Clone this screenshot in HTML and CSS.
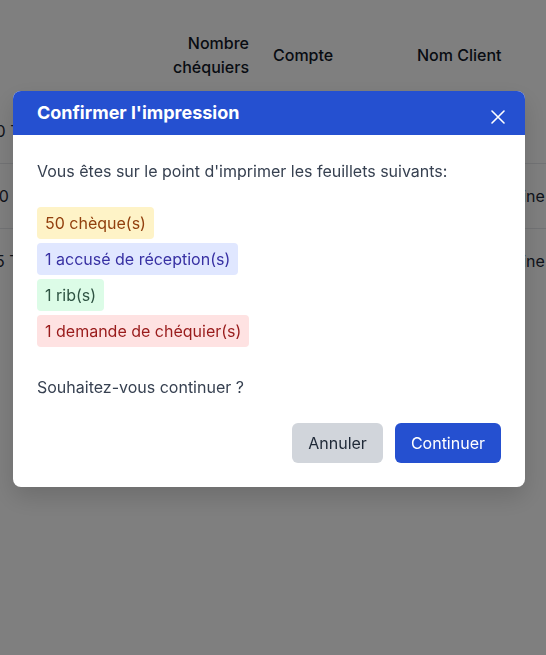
FILE: index.html
```html
<!DOCTYPE html>
<html lang="fr">
<head>
    <meta charset="UTF-8">
    <meta name="viewport" content="width=device-width, initial-scale=1.0">
    <title>Impression</title>
    <link rel="stylesheet" href="styles.css">
</head>
<body>

    <div class="table-wrap">
        <table class="list">
            <thead>
                <tr>
                    <th class="col-montant">N°</th>
                    <th class="col-nb">Nombre<br>chéquiers</th>
                    <th class="col-compte">Compte</th>
                    <th class="col-client">Nom Client</th>
                </tr>
            </thead>
            <tbody>
                <tr>
                    <td>3 000 TND</td>
                    <td class="num">2</td>
                    <td>0102345678</td>
                    <td>Ali Ben Salah</td>
                </tr>
                <tr>
                    <td>11 000</td>
                    <td class="num">1</td>
                    <td>0102345679</td>
                    <td>Mohamed Amine</td>
                </tr>
                <tr>
                    <td>2 205 TND</td>
                    <td class="num">1</td>
                    <td>0102345680</td>
                    <td>Mohamed Amine</td>
                </tr>
            </tbody>
        </table>
    </div>

    <div class="overlay">
        <div class="modal">
            <div class="modal-head">
                <h2>Confirmer l'impression</h2>
                <button type="button" class="close" aria-label="Fermer">
                    <svg width="14" height="14" viewBox="0 0 14 14">
                        <path d="M1 1 L13 13 M13 1 L1 13" stroke="#fff" stroke-width="1.6" stroke-linecap="round" fill="none"/>
                    </svg>
                </button>
            </div>
            <div class="modal-body">
                <p>Vous êtes sur le point d'imprimer les feuillets suivants:</p>

                <div class="badges">
                    <span class="badge yellow">50 chèque(s)</span>
                    <span class="badge indigo">1 accusé de réception(s)</span>
                    <span class="badge green">1 rib(s)</span>
                    <span class="badge red">1 demande de chéquier(s)</span>
                </div>

                <p class="ask">Souhaitez-vous continuer ?</p>

                <div class="actions">
                    <button type="button" class="btn btn-cancel">Annuler</button>
                    <button type="button" class="btn btn-ok">Continuer</button>
                </div>
            </div>
        </div>
    </div>

</body>
</html>
```

FILE: styles.css
```css
body {
    margin: 0;
    background: #fff;
    font-family: Inter, "Noto Sans", sans-serif;
    color: #111827;
}

.table-wrap {
    overflow: hidden;
    padding-top: 11px;
}

.list {
    border-collapse: collapse;
    table-layout: fixed;
    width: 605px;
    margin-left: -51px;
    font-size: 16px;
    line-height: 24px;
}

.list th,
.list td {
    box-sizing: border-box;
    padding: 20px 12px;
    white-space: nowrap;
}

.list th {
    font-weight: 500;
    color: #111827;
}

.list td {
    color: #1f2937;
}

.list tbody tr + tr td {
    border-top: 1px solid #e5e7eb;
}

.col-montant {
    width: 160px;
    text-align: left;
}

.col-nb {
    width: 152px;
    text-align: right;
}

.col-compte {
    width: 144px;
    text-align: left;
}

.col-client {
    width: 149px;
    text-align: left;
}

.list td.num {
    text-align: right;
}

/* modal */

.overlay {
    position: fixed;
    inset: 0;
    background: rgba(0, 0, 0, 0.5);
    display: flex;
    justify-content: center;
    align-items: flex-start;
    padding: 91px 8px 0 0;
}

.modal {
    width: 512px;
    background: #fff;
    border-radius: 8px;
    overflow: hidden;
    box-shadow: 0 10px 25px rgba(0, 0, 0, 0.15);
}

.modal-head {
    background: #2550d0;
    display: flex;
    justify-content: space-between;
    align-items: center;
    padding: 8px 20px 8px 24px;
}

.modal-head h2 {
    margin: 0;
    font-size: 18px;
    line-height: 28px;
    font-weight: 700;
    color: #fff;
}

.close {
    background: none;
    border: 0;
    padding: 0;
    width: 14px;
    height: 14px;
    margin-top: 8px;
    display: flex;
}

.modal-body {
    padding: 24px;
    color: #374151;
}

.modal-body p {
    margin: 0;
    font-size: 16px;
    line-height: 24px;
}

.badges {
    display: flex;
    flex-direction: column;
    align-items: flex-start;
    gap: 4px;
    margin-top: 24px;
}

.badge {
    font-size: 16px;
    line-height: 24px;
    padding: 4px 8px;
    border-radius: 4px;
}

.yellow {
    background: #fef3c7;
    color: #92400e;
}

.indigo {
    background: #e0e7ff;
    color: #3730a3;
}

.green {
    background: #dcfce7;
    color: #2f5443;
}

.red {
    background: #fee2e2;
    color: #991b1b;
}

.modal-body p.ask {
    margin-top: 28px;
}

.actions {
    display: flex;
    justify-content: flex-end;
    gap: 12px;
    margin-top: 24px;
}

.btn {
    font-family: inherit;
    font-size: 16px;
    line-height: 24px;
    padding: 8px 16px;
    border: 0;
    border-radius: 6px;
}

.btn-cancel {
    background: #d1d5db;
    color: #1f2937;
}

.btn-ok {
    background: #2550d0;
    color: #fff;
}
```
